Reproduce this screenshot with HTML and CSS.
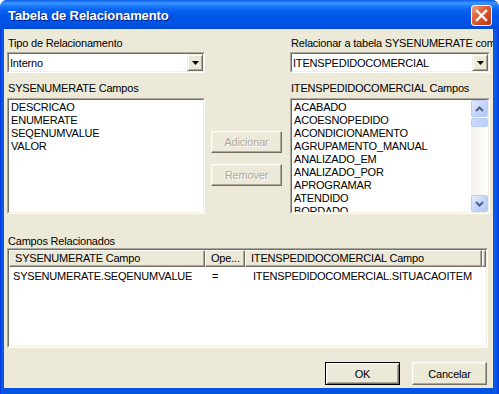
FILE: index.html
```html
<!DOCTYPE html>
<html lang="pt">
<head>
    <meta charset="UTF-8">
    <title>Tabela de Relacionamento</title>
    <link rel="stylesheet" href="styles.css">
</head>
<body>
    <div class="window">
        <div class="titlebar">
            <span class="title">Tabela de Relacionamento</span>
            <button class="close-btn" title="Fechar">
                <svg width="13" height="13" viewBox="0 0 13 13"><path d="M2 2 L11 11 M11 2 L2 11" stroke="#fff" stroke-width="2.4" stroke-linecap="square"/></svg>
            </button>
        </div>
        <div class="frame">
            <div class="client">
                <div class="top-area">
                    <div class="col col-left">
                        <div class="caption">Tipo de Relacionamento</div>
                        <div class="sunken combo">
                            <div class="sunken-in combo-in">
                                <span class="combo-text">Interno</span>
                                <span class="drop-btn"><svg width="7" height="4" viewBox="0 0 7 4"><path d="M0 0 H7 L3.5 4 Z" fill="#000"/></svg></span>
                            </div>
                        </div>
                        <div class="caption caption-gap">SYSENUMERATE Campos</div>
                        <div class="sunken listbox">
                            <div class="sunken-in listbox-in">
                                <div class="items">
                                    <div class="item">DESCRICAO</div>
                                    <div class="item">ENUMERATE</div>
                                    <div class="item">SEQENUMVALUE</div>
                                    <div class="item">VALOR</div>
                                </div>
                            </div>
                        </div>
                    </div>
                    <div class="col col-mid">
                        <button class="btn" disabled>Adicionar</button>
                        <button class="btn" disabled>Remover</button>
                    </div>
                    <div class="col col-right">
                        <div class="caption">Relacionar a tabela SYSENUMERATE com</div>
                        <div class="sunken combo">
                            <div class="sunken-in combo-in">
                                <span class="combo-text">ITENSPEDIDOCOMERCIAL</span>
                                <span class="drop-btn"><svg width="7" height="4" viewBox="0 0 7 4"><path d="M0 0 H7 L3.5 4 Z" fill="#000"/></svg></span>
                            </div>
                        </div>
                        <div class="caption caption-gap">ITENSPEDIDOCOMERCIAL Campos</div>
                        <div class="sunken listbox">
                            <div class="sunken-in listbox-in">
                                <div class="items">
                                    <div class="item">ACABADO</div>
                                    <div class="item">ACOESNOPEDIDO</div>
                                    <div class="item">ACONDICIONAMENTO</div>
                                    <div class="item">AGRUPAMENTO_MANUAL</div>
                                    <div class="item">ANALIZADO_EM</div>
                                    <div class="item">ANALIZADO_POR</div>
                                    <div class="item">APROGRAMAR</div>
                                    <div class="item">ATENDIDO</div>
                                    <div class="item">BORDADO</div>
                                </div>
                                <div class="vscroll">
                                    <span class="sb-btn"><svg width="9" height="6" viewBox="0 0 9 6"><path d="M1 5 L4.5 1.5 L8 5" fill="none" stroke="#4D6185" stroke-width="2"/></svg></span>
                                    <span class="sb-thumb"></span>
                                    <span class="sb-track"></span>
                                    <span class="sb-btn"><svg width="9" height="6" viewBox="0 0 9 6"><path d="M1 1 L4.5 4.5 L8 1" fill="none" stroke="#4D6185" stroke-width="2"/></svg></span>
                                </div>
                            </div>
                        </div>
                    </div>
                </div>

                <div class="caption caption-rel">Campos Relacionados</div>
                <div class="sunken listview">
                    <div class="sunken-in listview-in">
                        <div class="lv-header">
                            <div class="hcell c1">SYSENUMERATE Campo</div>
                            <div class="hcell c2">Ope...</div>
                            <div class="hcell c3">ITENSPEDIDOCOMERCIAL Campo</div>
                            <div class="hcell c4"></div>
                        </div>
                        <div class="lv-row">
                            <div class="cell c1">SYSENUMERATE.SEQENUMVALUE</div>
                            <div class="cell c2">=</div>
                            <div class="cell c3">ITENSPEDIDOCOMERCIAL.SITUACAOITEM</div>
                        </div>
                    </div>
                </div>

                <div class="footer">
                    <button class="btn btn-default">OK</button>
                    <button class="btn">Cancelar</button>
                </div>
            </div>
        </div>
    </div>
</body>
</html>
```

FILE: styles.css
```css
body {
    margin: 0;
    padding: 0;
    background-color: #fff;
    font-family: "Liberation Sans", Arial, sans-serif;
    font-size: 11px;
    letter-spacing: -0.2px;
    color: #000;
}
.window {
    width: 499px;
    height: 394px;
    display: flex;
    flex-direction: column;
    background: #0553E3;
    border-radius: 7px 7px 0 0;
    overflow: hidden;
}
.titlebar {
    height: 29px;
    flex-shrink: 0;
    display: flex;
    align-items: center;
    padding: 0 7px 0 8px;
    box-sizing: border-box;
    background: linear-gradient(#0A5DE8 0, #3D95FF 3px, #1B7BFA 6px, #0862EF 10px, #0055E8 16px, #0054E3 24px, #0048D8 29px);
}
.title {
    flex: 1;
    color: #fff;
    font-weight: bold;
    font-size: 13px;
    letter-spacing: -0.1px;
    text-shadow: 1px 1px #0A1E8A;
    padding-top: 1px;
}
.close-btn {
    width: 21px;
    height: 21px;
    padding: 0;
    border: 1px solid #fff;
    border-radius: 3px;
    background: linear-gradient(135deg, #F0A78C 0, #E2643D 35%, #C9411C 80%, #B53A1A 100%);
    display: flex;
    align-items: center;
    justify-content: center;
    margin-top: 2px;
}
.frame {
    flex: 1;
    display: flex;
    padding: 0 6px 6px 4px;
    background: linear-gradient(to right, #0831D9 0, #0A5CEA 2px, #0553E3 4px, #0553E3 493px, #0A5CEA 496px, #0831D9 499px);
    min-height: 0;
}
.client {
    flex: 1;
    background-color: #ECE9D8;
    padding: 8px 3px 3px 3px;
    display: flex;
    flex-direction: column;
    overflow: hidden;
}

/* classic 3d borders */
.sunken {
    border: 1px solid;
    border-color: #ACA899 #fff #fff #ACA899;
}
.sunken-in {
    border: 1px solid;
    border-color: #716F64 #F1EFE2 #F1EFE2 #716F64;
    background-color: #fff;
    height: 100%;
    box-sizing: border-box;
}
.btn {
    font-family: "Liberation Sans", Arial, sans-serif;
    font-size: 11px;
    letter-spacing: -0.2px;
    color: #000;
    background-color: #ECE9D8;
    border: 1px solid;
    border-color: #fff #716F64 #716F64 #fff;
    box-shadow: inset -1px -1px #ACA899, inset 1px 1px #F1EFE2;
    padding: 0;
}
.btn:disabled {
    color: #ACA899;
    text-shadow: 1px 1px #fff;
}
.btn-default {
    border: 1px solid #000;
    box-shadow: inset 1px 1px #fff, inset -1px -1px #716F64, inset 2px 2px #F1EFE2, inset -2px -2px #ACA899;
}

.top-area {
    display: flex;
    height: 206px;
}
.col {
    display: flex;
    flex-direction: column;
}
.col-left {
    width: 198px;
}
.col-mid {
    width: 71px;
    margin: 0 8px 0 6px;
    padding-top: 94px;
    gap: 11px;
}
.col-mid .btn {
    height: 22px;
}
.col-right {
    width: 200px;
}
.caption {
    line-height: 13px;
    height: 13px;
    padding-left: 1px;
    white-space: nowrap;
}
.caption-gap {
    margin-top: 9px;
    margin-bottom: 3px;
}
.combo {
    height: 21px;
    margin-top: 2px;
    box-sizing: border-box;
}
.combo-in {
    display: flex;
    align-items: center;
}
.combo-text {
    flex: 1;
    padding-left: 1px;
    padding-top: 1px;
}
.drop-btn {
    width: 16px;
    height: 17px;
    box-sizing: border-box;
    display: flex;
    align-items: center;
    justify-content: center;
    background-color: #ECE9D8;
    border: 1px solid;
    border-color: #F1EFE2 #716F64 #716F64 #F1EFE2;
    box-shadow: inset 1px 1px #fff, inset -1px -1px #ACA899;
}
.listbox {
    height: 116px;
    box-sizing: border-box;
}
.listbox-in {
    display: flex;
    overflow: hidden;
}
.items {
    flex: 1;
    padding-left: 2px;
    padding-top: 1px;
    overflow: hidden;
}
.item {
    line-height: 13px;
    height: 13px;
    white-space: nowrap;
}
.vscroll {
    width: 17px;
    display: flex;
    flex-direction: column;
    background: linear-gradient(to right, #F3F1EC, #FEFEFB);
}
.sb-btn {
    height: 17px;
    box-sizing: border-box;
    border: 1px solid #B8CCF7;
    border-radius: 2px;
    background: linear-gradient(135deg, #E4ECFD 0, #C6D5FB 50%, #B4C8F5 100%);
    display: flex;
    align-items: center;
    justify-content: center;
}
.sb-thumb {
    height: 9px;
    margin-top: 1px;
    box-sizing: border-box;
    border: 1px solid #B8CCF7;
    border-radius: 2px;
    background: linear-gradient(to right, #C9D8FC, #BBCEF7);
}
.sb-track {
    flex: 1;
}

.caption-rel {
    margin-top: 11px;
}
.listview {
    height: 110px;
    margin-right: 2px;
    box-sizing: border-box;
}
.lv-header {
    display: flex;
    height: 17px;
}
.hcell {
    height: 17px;
    box-sizing: border-box;
    line-height: 15px;
    padding-left: 5px;
    white-space: nowrap;
    overflow: hidden;
    background-color: #ECE9D8;
    border: 1px solid;
    border-color: #fff #716F64 #716F64 #fff;
    box-shadow: inset -1px -1px #ACA899;
}
.c1 {
    width: 196px;
}
.c2 {
    width: 40px;
}
.c3 {
    width: 237px;
}
.hcell.c4 {
    flex: 1;
    padding: 0;
}
.lv-row {
    display: flex;
    height: 16px;
    line-height: 16px;
    margin-top: 1px;
}
.cell {
    padding-left: 4px;
    box-sizing: border-box;
    white-space: nowrap;
}
.cell.c2 {
    padding-left: 7px;
}
.cell.c3 {
    padding-left: 8px;
}
.footer {
    display: flex;
    justify-content: flex-end;
    gap: 12px;
    margin-top: 14px;
    padding-right: 3px;
}
.footer .btn {
    width: 75px;
    height: 23px;
}
```
